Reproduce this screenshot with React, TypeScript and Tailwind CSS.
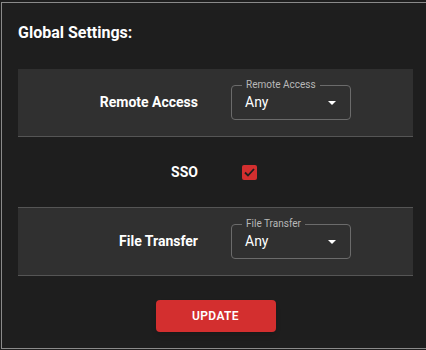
import { useState } from "react";

function SelectField({ label, value }: { label: string; value: string }) {
  return (
    <div className="relative h-[35px] w-[120px] rounded-[4px] border border-[#6b6b6b]">
      <span className="absolute -top-[8px] left-[10px] bg-[#303030] px-[4px] text-[10px] leading-[14px] text-[#b8b8b8]">
        {label}
      </span>
      <div className="flex h-full items-center justify-between pl-[13px] pr-[14px]">
        <span className="text-[14px] text-white">{value}</span>
        <svg width="8" height="4" viewBox="0 0 8 4" className="fill-white">
          <path d="M0 0 L8 0 L4 4 Z" />
        </svg>
      </div>
    </div>
  );
}

function Row({ label, shaded, h, children }: { label: string; shaded?: boolean; h: string; children: React.ReactNode }) {
  return (
    <div className={`grid grid-cols-[180px_1fr] items-center gap-x-[33px] border-b border-[#555] ${shaded ? "bg-[#303030]" : ""} ${h}`}>
      <div className="text-right text-[14px] font-bold text-white">{label}</div>
      <div className="flex items-center">{children}</div>
    </div>
  );
}

export default function App() {
  const [sso, setSso] = useState(true);

  return (
    <div className="h-[350px] w-[426px] bg-[#1e1e1e] pt-[2px] pl-[1px] font-['Roboto',sans-serif]">
      <div className="h-[347px] border-y border-l border-[#8a8a8a] pl-[16px] pr-[13px]">
        <h2 className="pt-[19px] text-[16px] font-bold leading-[22px] text-white">Global Settings:</h2>

        <div className="mt-[25px]">
          <Row label="Remote Access" shaded h="h-[68px]">
            <SelectField label="Remote Access" value="Any" />
          </Row>
          <Row label="SSO" h="h-[71px]">
            <button
              onClick={() => setSso(!sso)}
              className="ml-[11px] grid h-[15px] w-[15px] place-items-center rounded-[2px] bg-[#d32f2f]"
              aria-label="SSO"
            >
              {sso ? (
                <svg width="11" height="9" viewBox="0 0 11 9" fill="none">
                  <path d="M1 4.5 L4 7.5 L10 1" stroke="#1e1e1e" strokeWidth="1.8" />
                </svg>
              ) : null}
            </button>
          </Row>
          <Row label="File Transfer" shaded h="h-[68px]">
            <SelectField label="File Transfer" value="Any" />
          </Row>
        </div>

        <div className="mt-[24px] flex justify-center">
          <button className="h-[32px] w-[120px] rounded-[4px] bg-[#d32f2f] text-[12px] font-semibold tracking-[0.4px] text-white shadow-md">
            UPDATE
          </button>
        </div>
      </div>
    </div>
  );
}
